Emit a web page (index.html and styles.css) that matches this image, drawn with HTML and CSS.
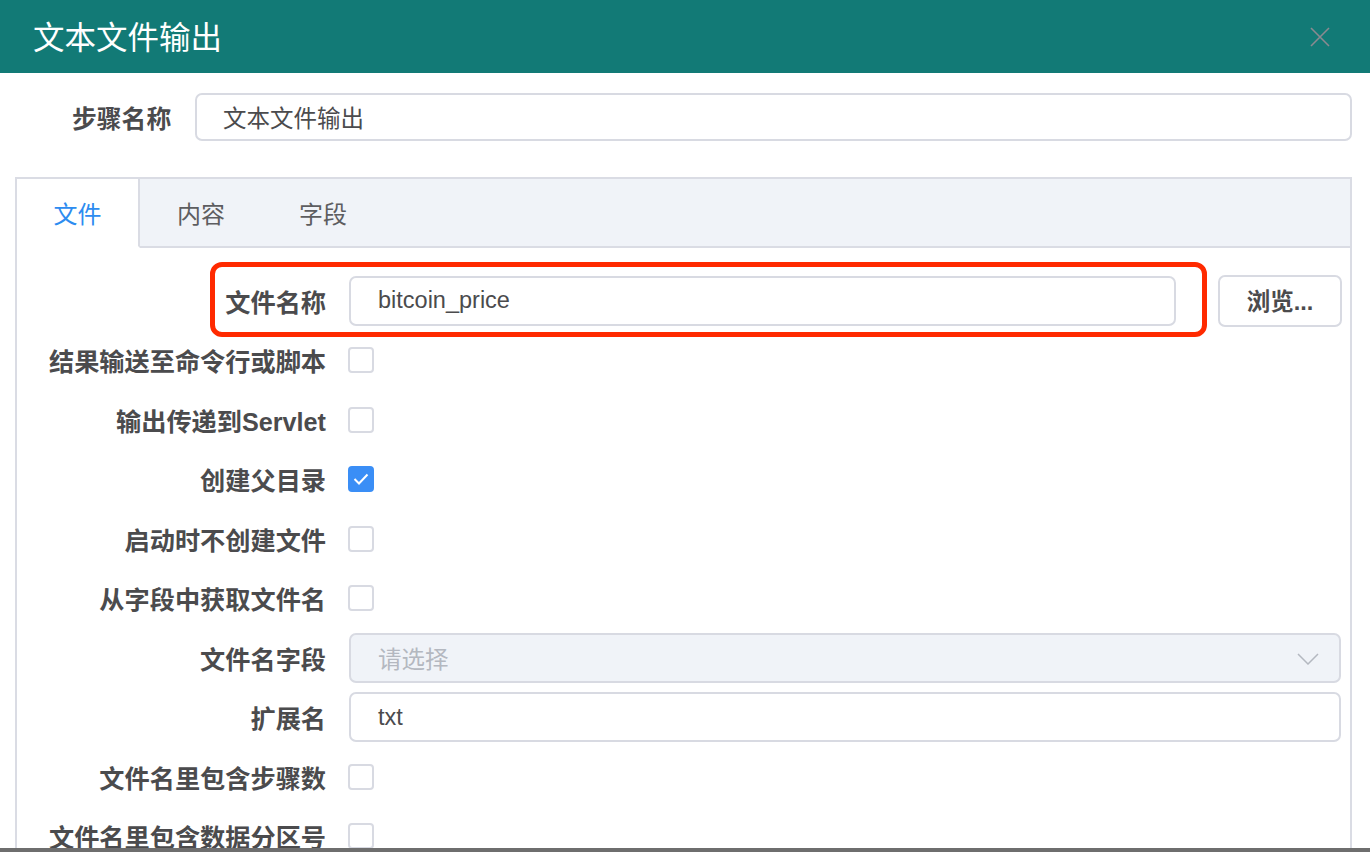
FILE: index.html
```html
<!DOCTYPE html>
<html lang="zh">
<head>
<meta charset="utf-8">
<title>文本文件输出</title>
<link rel="stylesheet" href="styles.css">
</head>
<body>
<div class="dialog">
  <div class="header">
    <div class="title">文本文件输出</div>
    <svg class="close" width="20" height="20" viewBox="0 0 20 20"><path d="M1 1 L19 19 M19 1 L1 19" stroke="#8a8a90" stroke-width="1.6" fill="none"/></svg>
  </div>
  <div class="step-row">
    <div class="step-label">步骤名称</div>
    <div class="input step-input">文本文件输出</div>
  </div>
  <div class="panel">
    <div class="tabs">
      <div class="tab active">文件</div>
      <div class="tab">内容</div>
      <div class="tab">字段</div>
      <div class="tab-fill"></div>
    </div>
    <div class="form">
      <div class="row">
        <div class="label">文件名称</div>
        <div class="ctrl">
          <div class="input file-input">bitcoin_price</div>
          <div class="btn">浏览...</div>
        </div>
        <div class="highlight"></div>
      </div>
      <div class="row">
        <div class="label">结果输送至命令行或脚本</div>
        <div class="ctrl"><span class="cb"></span></div>
      </div>
      <div class="row">
        <div class="label">输出传递到Servlet</div>
        <div class="ctrl"><span class="cb"></span></div>
      </div>
      <div class="row">
        <div class="label">创建父目录</div>
        <div class="ctrl"><span class="cb checked"><svg width="16" height="12" viewBox="0 0 16 12"><path d="M1.5 6 L6 10.5 L14.5 1.5" stroke="#fff" stroke-width="2" fill="none"/></svg></span></div>
      </div>
      <div class="row">
        <div class="label">启动时不创建文件</div>
        <div class="ctrl"><span class="cb"></span></div>
      </div>
      <div class="row">
        <div class="label">从字段中获取文件名</div>
        <div class="ctrl"><span class="cb"></span></div>
      </div>
      <div class="row">
        <div class="label">文件名字段</div>
        <div class="ctrl">
          <div class="input select disabled"><span class="placeholder">请选择</span>
            <svg class="chev" width="22" height="12" viewBox="0 0 22 12"><path d="M1 1 L11 11 L21 1" stroke="#b4b8c0" stroke-width="1.5" fill="none"/></svg>
          </div>
        </div>
      </div>
      <div class="row">
        <div class="label">扩展名</div>
        <div class="ctrl"><div class="input wide">txt</div></div>
      </div>
      <div class="row">
        <div class="label">文件名里包含步骤数</div>
        <div class="ctrl"><span class="cb"></span></div>
      </div>
      <div class="row">
        <div class="label">文件名里包含数据分区号</div>
        <div class="ctrl"><span class="cb"></span></div>
      </div>
    </div>
  </div>
</div>
<div class="bottom-strip"></div>
</body>
</html>
```
FILE: styles.css
```css
* { box-sizing: border-box; }
html, body { margin: 0; padding: 0; }
body {
  width: 1370px;
  height: 852px;
  overflow: hidden;
  position: relative;
  background: #fff;
  font-family: "Liberation Sans", "Noto Sans CJK SC", sans-serif;
  color: #4b4b4d;
}
.dialog { height: 852px; overflow: hidden; }
.header {
  height: 73px;
  background: #127a76;
  display: flex;
  align-items: center;
  justify-content: space-between;
  padding: 0 40px 0 33px;
}
.title {
  color: #fff;
  font-family: "Noto Sans CJK SC", sans-serif;
  font-size: 31.5px;
  line-height: 1;
  margin-top: -1px;
}
.step-row {
  display: flex;
  align-items: center;
  padding: 20px 18px 0 72px;
}
.step-label {
  font-size: 24.8px;
  font-weight: bold;
  width: 98px;
  margin-right: 25px;
  white-space: nowrap;
}
.input {
  height: 48px;
  border: 2px solid #d8dae2;
  border-radius: 7px;
  background: #fff;
  display: flex;
  align-items: center;
  padding-left: 26px;
  font-size: 23.5px;
  color: #4b4b4d;
}
.step-input { flex: 1; }
.panel {
  margin: 36px 18px 0 15px;
  border: 2px solid #dadce4;
  border-bottom: none;
  height: 675px;
  overflow: hidden;
}
.tabs {
  display: flex;
  height: 69px;
  background: #f0f3f8;
}
.tab {
  width: 122px;
  display: flex;
  align-items: center;
  justify-content: center;
  font-size: 24px;
  color: #5d5d60;
  font-family: "Noto Sans CJK SC", sans-serif;
  border-bottom: 2px solid #dadce4;
}
.tab.active {
  background: #fff;
  color: #2d8cf0;
  border-right: 2px solid #dadce4;
  border-bottom-color: #fff;
  width: 123px;
}
.tab-fill { flex: 1; border-bottom: 2px solid #dadce4; }
.form {
  padding: 28px 9px 0 0;
  display: flex;
  flex-direction: column;
  gap: 10.5px;
}
.row {
  display: flex;
  align-items: center;
  height: 49px;
  position: relative;
  flex: none;
}
.label {
  width: 309px;
  flex: none;
  text-align: right;
  font-size: 25.2px;
  font-weight: bold;
  color: #4b4b4d;
  white-space: nowrap;
  margin-right: 23px;
}
.ctrl {
  flex: 1;
  display: flex;
  align-items: center;
  gap: 42px;
}
.file-input { width: 827px; height: 50px; padding-left: 27px; }
.btn {
  width: 124px;
  height: 52px;
  border: 2px solid #d8dae2;
  border-radius: 7px;
  display: flex;
  align-items: center;
  justify-content: center;
  font-size: 23.5px;
  font-weight: bold;
  color: #4b4b4d;
  padding-bottom: 2px;
}
.wide { flex: 1; height: 50px; padding-left: 27px; }
.select { flex: 1; height: 50px; justify-content: space-between; padding-left: 27px; padding-right: 20px; }
.disabled { background: #f0f3f8; }
.placeholder { color: #b4b8c0; }
.chev { margin-top: 2px; }
.cb {
  width: 26px;
  height: 26px;
  margin-left: -1px;
  border: 2px solid #d8dae2;
  border-radius: 4px;
  background: #fff;
  display: inline-flex;
  align-items: center;
  justify-content: center;
}
.cb.checked { background: #3a8ef6; border-color: #3a8ef6; }
.highlight {
  position: absolute;
  left: 193px;
  top: -14px;
  width: 997px;
  height: 75px;
  border: 5px solid #ff2a00;
  border-radius: 12px;
  pointer-events: none;
}
.bottom-strip {
  position: absolute;
  left: 0;
  right: 0;
  bottom: 0;
  height: 4px;
  background: #6e6e6e;
}
```
